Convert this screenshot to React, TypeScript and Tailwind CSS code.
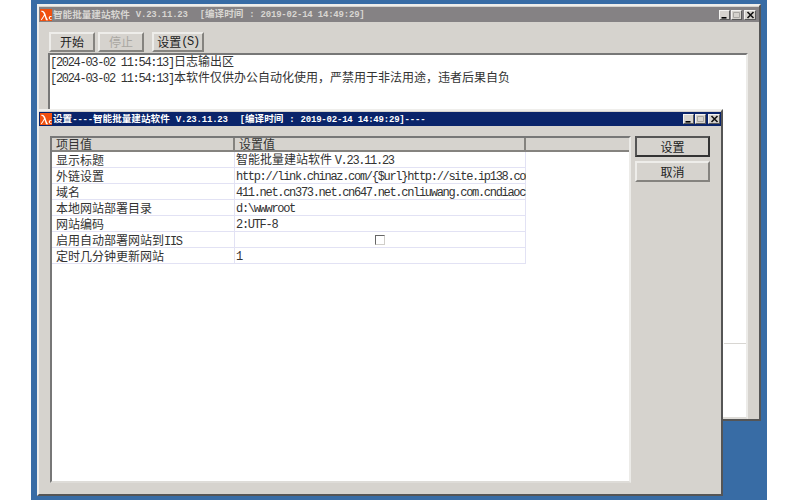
import React from "react";

const cjk = "font-['Noto_Sans_CJK_SC',sans-serif]";

function L({ children, bold }: { children: React.ReactNode; bold?: boolean }) {
  return bold ? (
    <span className="font-['Liberation_Mono',monospace] text-[9px] font-bold tracking-[-0.2px]">{children}</span>
  ) : (
    <span className="font-['Liberation_Mono',monospace] text-[12px] tracking-[-1.3px]">{children}</span>
  );
}

function AppIcon() {
  return (
    <svg width="12" height="12" viewBox="0 0 14 14" className="shrink-0 ml-[1px]">
      <rect width="14" height="14" fill="#f0500f" />
      <path d="M1.5 2 C4 1.5 5.5 3 6.5 6 C7 8 8 11 9.5 13 L7 13 C6.3 11 5.8 9.5 5.2 8 C4.4 9.5 3.2 11.5 1.8 13 L1 12.5 C2.5 10.5 4 8.5 4.7 6.5 C4.2 4.5 3 3.3 1.5 3.2 Z" fill="#fff" />
      <path d="M13.5 8.5 C11.5 7.8 10.2 9 10.2 10.6 C10.2 12.2 11.8 13 13.5 12.4 L13.5 11.6 C12.4 12 11.4 11.6 11.4 10.6 C11.4 9.6 12.4 9 13.5 9.4 Z" fill="#fff" />
    </svg>
  );
}

function CaptionBtn({ kind, wide }: { kind: "min" | "max" | "close"; wide?: boolean }) {
  return (
    <div className={`${wide ? "w-[12px]" : "w-[11px]"} h-[10px] bg-[#d6d3ce] border-t border-l border-t-[#f4f3f1] border-l-[#f4f3f1] border-r border-b border-r-[#5a5a5a] border-b-[#5a5a5a] flex items-center justify-center shrink-0`}>
      <svg width="9" height="8" viewBox="0 0 9 8">
        {kind === "min" && <rect x="1.5" y="6" width="5" height="1.6" fill="#000" />}
        {kind === "max" && <path d="M1.5 1.5h6v5h-6z" fill="none" stroke="#a8a6a2" strokeWidth="1" />}
        {kind === "close" && <path d="M1.5 1 L7.5 7 M7.5 1 L1.5 7" stroke="#111" strokeWidth="1.6" />}
      </svg>
    </div>
  );
}

function CaptionBtns() {
  return (
    <div className="ml-auto flex items-center">
      <CaptionBtn kind="min" />
      <div className="w-[1px]" />
      <CaptionBtn kind="max" />
      <div className="w-[2px]" />
      <CaptionBtn kind="close" wide />
    </div>
  );
}

function Btn({ children, w, disabled, def, h = "h-[20px]" }: { children: React.ReactNode; w: string; disabled?: boolean; def?: boolean; h?: string }) {
  return (
    <div
      className={`${w} ${h} flex items-center justify-center text-[12px] leading-none shrink-0 ${
        disabled ? "text-[#a9a7a2]" : "text-[#222]"
      } ${
        def
          ? "border-2 border-t-[#555] border-l-[#555] border-r-[#333] border-b-[#333]"
          : "border-2 border-t-[#eeedea] border-l-[#eeedea] border-r-[#85837f] border-b-[#85837f]"
      }`}
    >
      {children}
    </div>
  );
}

const rows: [React.ReactNode, React.ReactNode][] = [
  ["显示标题", <>智能批量建站软件 <L>V.23.11.23</L></>],
  ["外链设置", <L>http://link.chinaz.com/{"{$url}"}http://site.ip138.com</L>],
  ["域名", <L>411.net.cn373.net.cn647.net.cnliuwang.com.cndiaoche.com</L>],
  ["本地网站部署目录", <L>d:\wwwroot</L>],
  ["网站编码", <L>2:UTF-8</L>],
  [<>启用自动部署网站到<L>IIS</L></>, null],
  ["定时几分钟更新网站", <L>1</L>],
];

export default function App() {
  return (
    <div className={`w-[800px] h-[500px] bg-white overflow-hidden ${cjk} text-[12px] text-[#333]`}>
      <div className="relative ml-[31px] w-[736px] h-[500px] bg-[#386ca5] pt-[4px] px-[6px]">
        {/* main window */}
        <div className="h-[417px] bg-[#d6d3ce] border-t-2 border-l-2 border-t-[#efeeeb] border-l-[#efeeeb] border-r-2 border-b-2 border-r-[#555] border-b-[#555] flex flex-col">
          <div className="h-[15px] mt-[1px] bg-[#858284] flex items-center pr-[3px] text-[#d8d6d2] text-[9.6px] font-bold leading-none whitespace-nowrap shrink-0">
            <AppIcon />
            <span className="ml-[1px]">智能批量建站软件</span>
            <span className="ml-[6px]"><L bold>V.23.11.23</L></span>
            <span className="ml-[12px]"><L bold>[</L>编译时间</span>
            <span className="ml-[6px]"><L bold>:</L></span>
            <span className="ml-[6px]"><L bold>2019-02-14 14:49:29]</L></span>
            <CaptionBtns />
          </div>
          <div className="flex pl-[10px] pt-[10px] h-[31px] shrink-0">
            <Btn w="w-[46px]">开始</Btn>
            <div className="w-[3px]" />
            <Btn w="w-[46px]" disabled>停止</Btn>
            <div className="w-[8px]" />
            <Btn w="w-[52px]">设置<L>(S)</L></Btn>
          </div>
          <div className="flex-1 ml-[9px] mr-[11px] bg-white border-t-2 border-l-2 border-t-[#777] border-l-[#777] border-r-2 border-r-[#ecebe8] border-b-2 border-b-[#dedcd8] min-h-0 relative">
            <div className="-mt-[2px] h-[16px] leading-[16px] whitespace-nowrap"><L>[2024-03-02 11:54:13]</L>日志输出区</div>
            <div className="h-[16px] leading-[16px] whitespace-nowrap"><L>[2024-03-02 11:54:13]</L>本软件仅供办公自动化使用，严禁用于非法用途，违者后果自负</div>
            <div className="absolute left-[674px] right-0 top-[288px] h-[1px] bg-[#d8d6d2]" />
          </div>
        </div>

        {/* dialog window */}
        <div className="absolute left-[6px] top-[109px] w-[686px] h-[387px] bg-[#d6d3ce] border-t-2 border-l-2 border-t-[#efeeeb] border-l-[#efeeeb] border-r-2 border-b-2 border-r-[#555] border-b-[#555] flex flex-col">
          <div className="h-[14px] mt-[1px] bg-[#0a246a] flex items-center pr-[1px] text-white text-[9.6px] font-bold leading-none whitespace-nowrap shrink-0">
            <AppIcon />
            <span className="ml-[1px]">设置<L bold>----</L>智能批量建站软件</span>
            <span className="ml-[6px]"><L bold>V.23.11.23</L></span>
            <span className="ml-[12px]"><L bold>[</L>编译时间</span>
            <span className="ml-[6px]"><L bold>:</L></span>
            <span className="ml-[6px]"><L bold>2019-02-14 14:49:29]----</L></span>
            <CaptionBtns />
          </div>
          <div className="flex-1 flex min-h-0 pl-[11px] pt-[10px] pb-[11px] pr-[11px]">
            <div className="w-[581px] bg-white border-t-2 border-l-2 border-t-[#777] border-l-[#777] border-r-2 border-r-[#ecebe8] border-b-2 border-b-[#dedcd8] overflow-hidden">
              <div className="grid grid-cols-[183px_291px_1fr] h-[14px] bg-[#d6d3ce] border-b-2 border-b-[#85837f]">
                <div className="pl-[4px] leading-[12px] border-r-2 border-r-[#85837f]">项目值</div>
                <div className="pl-[4px] leading-[12px] border-r-2 border-r-[#85837f]">设置值</div>
                <div />
              </div>
              <div className="w-[474px]">
                {rows.map(([a, b], i) => (
                  <div key={i} className="grid grid-cols-[183px_291px] h-[16px] border-b border-b-[#e2e2f4] border-r border-r-[#e2e2f4]">
                    <div className="pl-[4px] leading-[15px] whitespace-nowrap border-r border-r-[#e2e2f4]">{a}</div>
                    <div className="pl-[1px] leading-[13px] whitespace-nowrap overflow-x-clip">
                      {b ?? (
                        <div className="flex justify-center items-center h-[15px]">
                          <div className="w-[10px] h-[10px] bg-white border border-t-[#666] border-l-[#666] border-r-[#d0cec9] border-b-[#d0cec9] mr-[3px]" />
                        </div>
                      )}
                    </div>
                  </div>
                ))}
              </div>
            </div>
            <div className="ml-[4px] flex flex-col gap-[4px]">
              <Btn w="w-[75px]" h="h-[21px]" def>设置</Btn>
              <Btn w="w-[75px]" h="h-[21px]">取消</Btn>
            </div>
          </div>
        </div>
      </div>
    </div>
  );
}
